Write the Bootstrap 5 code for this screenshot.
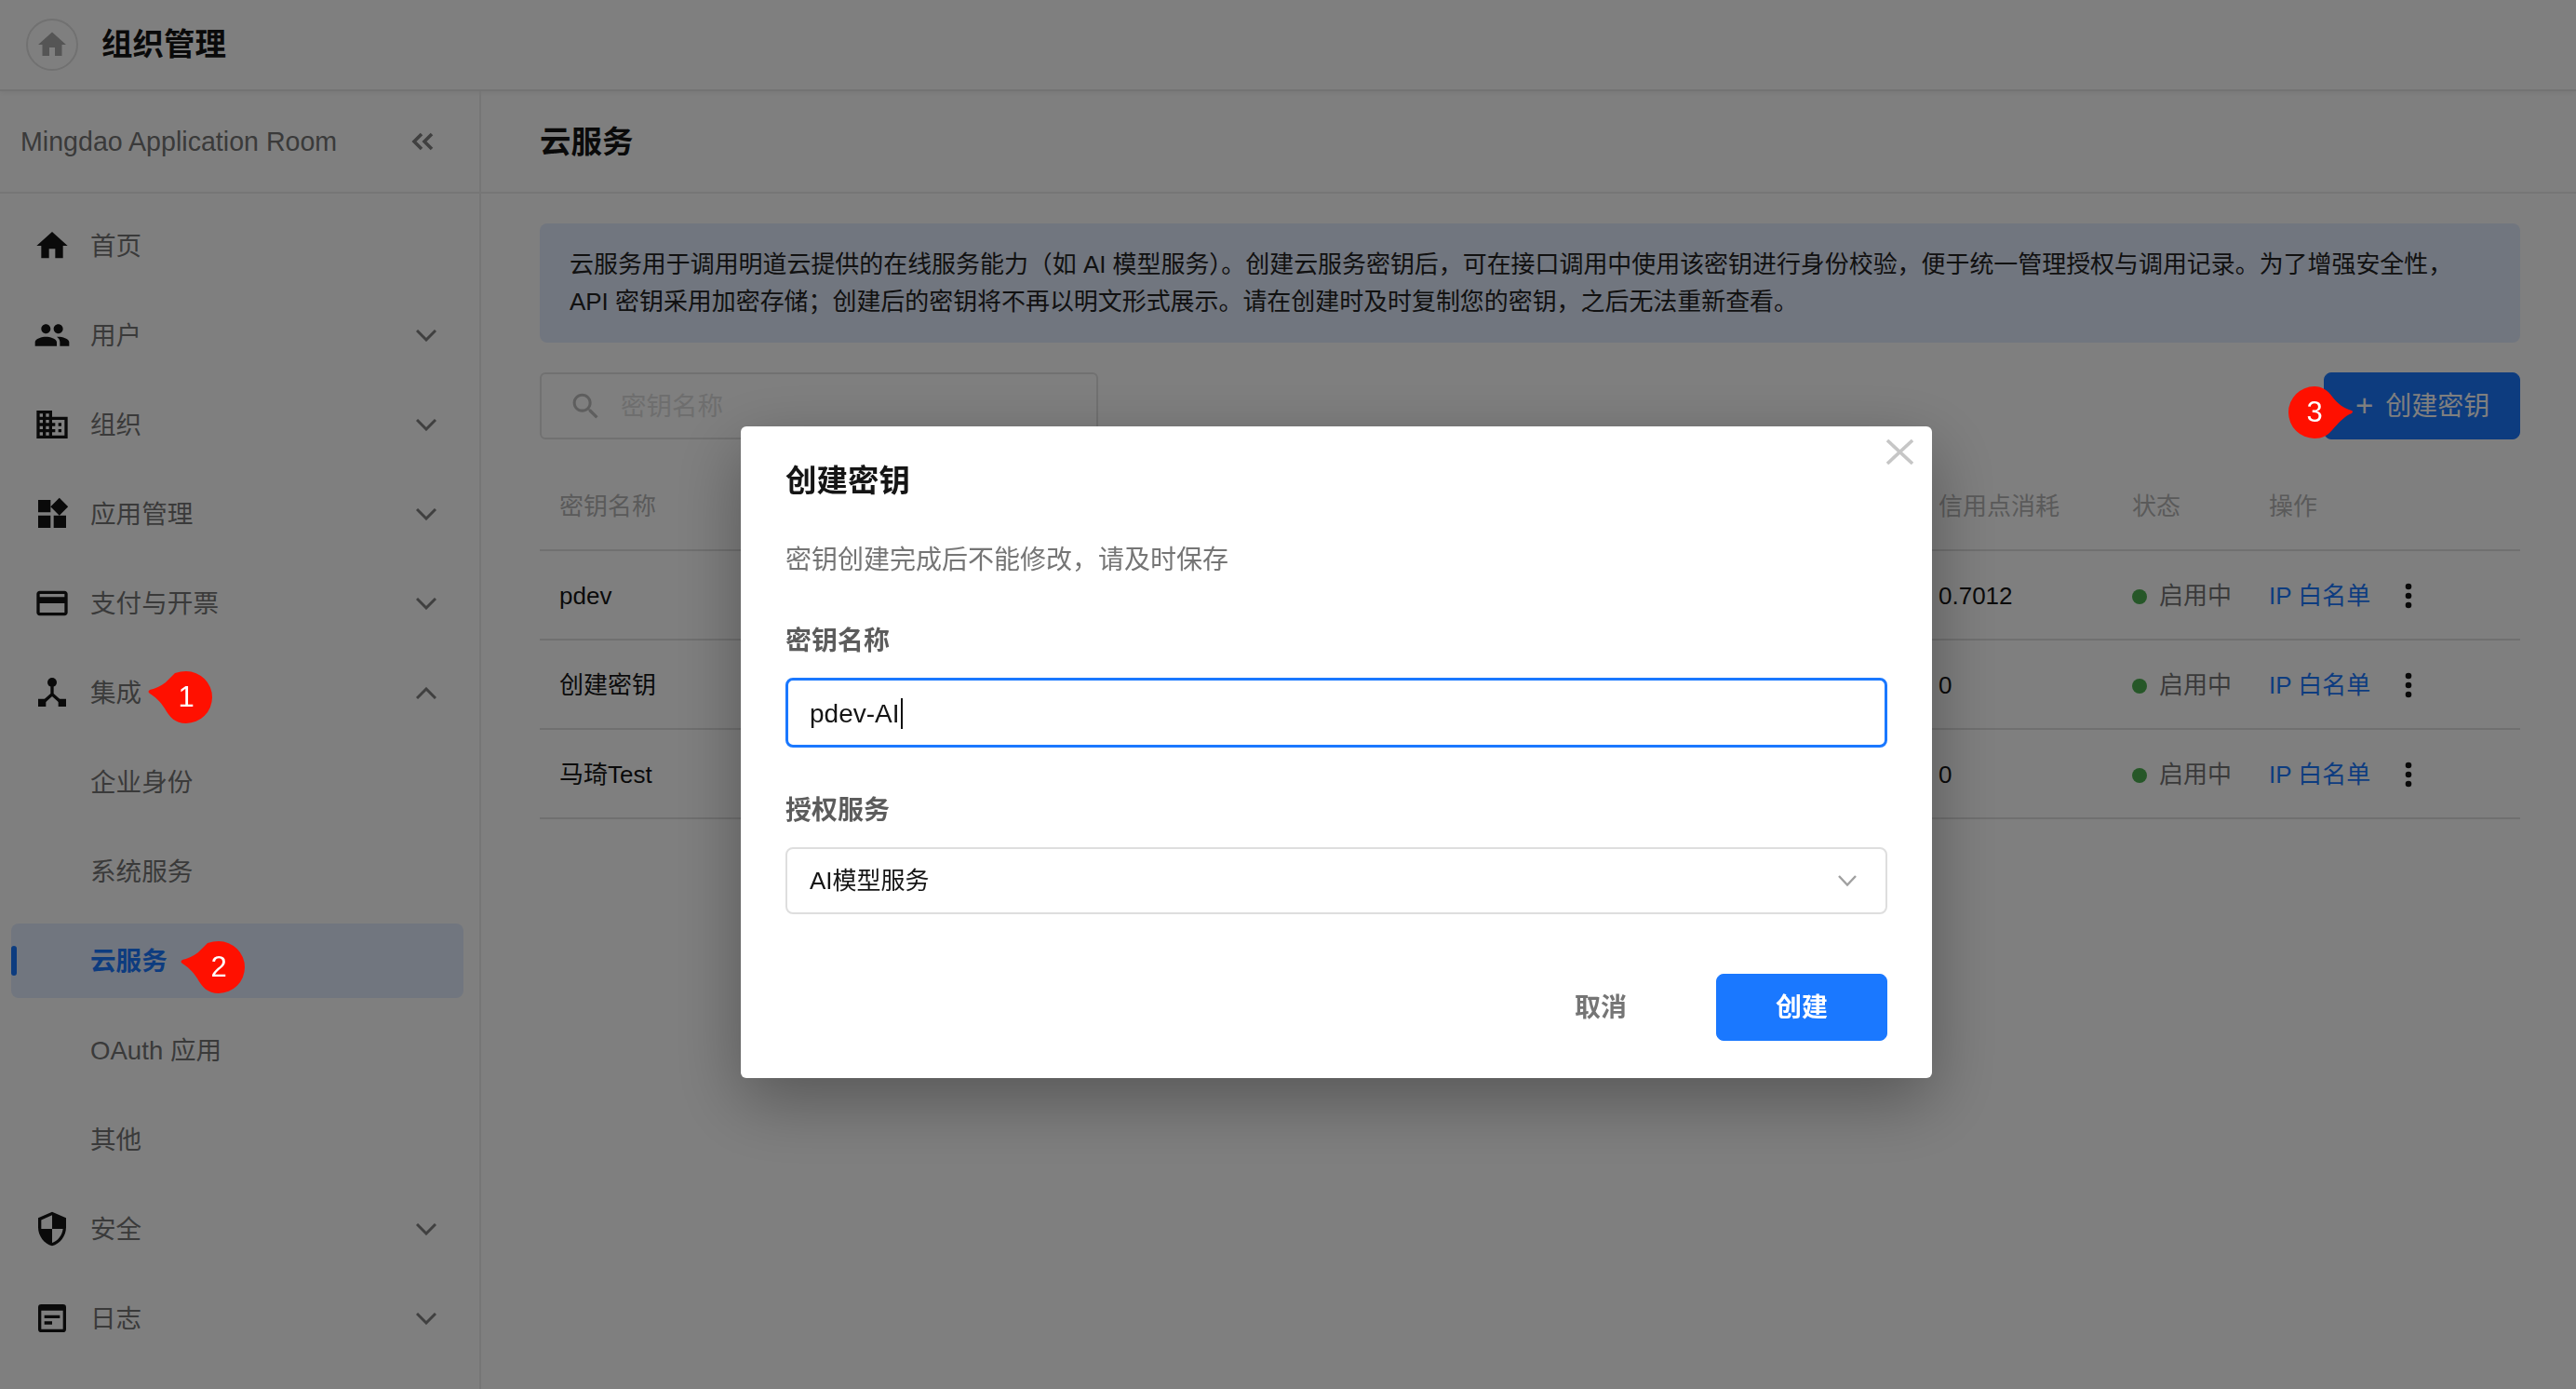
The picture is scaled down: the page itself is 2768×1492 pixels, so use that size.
<!DOCTYPE html>
<html lang="zh-CN">
<head>
  <meta charset="UTF-8" />
  <meta name="viewport" content="width=device-width, initial-scale=1.0"/>
  <title>组织管理 - 云服务</title>
  <link href="https://cdn.jsdelivr.net/npm/bootstrap@5.3.0/dist/css/bootstrap.min.css" rel="stylesheet" />
  <style>
    html, body { height: 100%; overflow: hidden; }
    body {
      font-family: "Liberation Sans", "Noto Sans CJK SC", sans-serif;
      font-size: 28px;
      color: #151515;
      background: #fff;
    }
    .top-bar { height: 98px; padding-left: 28px; border-bottom: 2px solid #e6e6e6; box-shadow: 0 2px 6px rgba(0,0,0,.06); gap: 25px; }
    .home-circle { width: 56px; height: 56px; border: 2px solid #e2e2e2; border-radius: 50%; color: #aaa; }
    .top-title { font-size: 33.5px; font-weight: 700; line-height: 1; }
    .page-body { height: 1394px; }

    .side-panel { width: 517px; flex: none; border-right: 2px solid #ececec; }
    .side-head { height: 110px; padding: 0 49px 0 22px; border-bottom: 2px solid #ececec; color: #757575; font-size: 28.6px; }
    .side-menu { padding: 16px 17px 0 12px; gap: 16px; }
    .menu-row { height: 80px; padding: 0 29px 0 24px; color: #757575; text-decoration: none; border-radius: 8px; gap: 21px; font-size: 27.6px; }
    .menu-row > span { padding-top: 2px; }
    .menu-row > svg:first-child { width: 40px; height: 40px; flex: none; color: #151515; }
    .menu-row .row-arrow { width: 22px; height: 13px; margin-left: auto; color: #808080; }
    .menu-sub { padding-left: 85px; }
    .menu-on { background: #e2ecff; color: #1a78ff; font-weight: 700; }
    .menu-on::before { content: ""; position: absolute; left: 0; top: 24px; width: 6px; height: 32px; border-radius: 3px; background: #1a78ff; }

    .main-panel { padding: 0 60px 0 63px; min-width: 0; }
    .main-wrap { min-width: 0; }
    .main-head { height: 110px; padding: 2px 0 0 63px; border-bottom: 2px solid #ececec; font-size: 33.5px; font-weight: 700; }
    .info-box { height: 128px; padding: 24px 32px; margin-top: 32px; background: #e2ecff; border-radius: 8px; font-size: 25.94px; line-height: 40px; color: #222; white-space: nowrap; }
    .tool-row { margin-top: 32px; height: 72px; }
    .search-box { width: 600px; height: 72px; padding-left: 29px; gap: 19px; border: 2px solid #e2e2e2; border-radius: 6px; color: #bdbdbd; }
    .search-box svg { width: 37px; height: 37px; flex: none; }
    .search-box input { border: 0; padding: 2px 0 0; font-size: 27.5px; background: transparent; box-shadow: none; }
    .search-box input::placeholder { color: #dcdcdc; opacity: 1; }
    .add-btn { width: 211px; height: 72px; padding: 2px 0 0 33px; gap: 13px; font-size: 28px; --bs-btn-bg: #1a78ff; --bs-btn-border-color: #1a78ff; border-radius: 8px; }
    .plus-sign { font-size: 33px; line-height: 1; margin-top: -4px; }

    .key-table { margin: 24px 0 0; border-collapse: separate; border-spacing: 0; table-layout: fixed; width: 2128px; font-size: 26px; }
    .key-table th, .key-table td { height: 96px; padding: 2px 0 0 19px; vertical-align: middle; border-bottom: 2px solid #e0e0e0; background: transparent; white-space: nowrap; }
    .key-table th:first-child, .key-table td:first-child { padding-left: 21px; }
    .key-table th { font-weight: 400; color: #b5b5b5; }
    .key-table td { color: #151515; }
    .col-name { width: 1484px; }
    .col-cost { width: 208px; }
    .col-state { width: 147px; }
    .state-dot { display: inline-block; width: 16px; height: 16px; margin-right: 13px; border-radius: 50%; background: #4caf50; vertical-align: 0; }
    .state-text { color: #757575; }
    .ip-link { color: #1a78ff; text-decoration: none; }
    .more-dots { width: 8px; height: 28px; margin-left: 37px; vertical-align: -5px; color: #151515; }

    .modal-dialog.key-dialog { max-width: none; width: 1280px; margin: 458px 0 0 796px; }
    .key-dialog .modal-content { height: 700px; border: 0; border-radius: 6px; box-shadow: 0 24px 72px rgba(0,0,0,.32); color: #151515; }
    .key-dialog .modal-body { padding: 37px 48px 40px 48px; }
    .dialog-close { position: absolute; top: 14px; right: 20px; width: 29px; height: 27px; padding: 0; border: 0; background: none; color: #c6c6c6; line-height: 0; }
    .dialog-title { margin: 0; font-size: 33.5px; line-height: 44px; font-weight: 700; }
    .dialog-note { margin: 43px 0 0; line-height: 40px; color: #757575; }
    .dialog-label { display: block; margin: 0 0 19px; line-height: 40px; font-weight: 700; color: #5c5c5c; }
    .first-label { margin-top: 47px; }
    .second-label { margin-top: 48px; }
    .key-input { display: flex; align-items: center; height: 75px; padding: 2px 23px 0; border: 3px solid #1a78ff; border-radius: 8px; font-size: 28px; color: #151515; }
    .key-caret { display: inline-block; width: 2px; height: 33px; margin-left: 1px; background: #111; }
    .key-select { height: 72px; padding: 0 24px; border: 2px solid #dedede; border-radius: 8px; font-size: 26px; color: #151515; background-size: 20px 12px; background-position: right 31px center;
      background-image: url("data:image/svg+xml,%3csvg xmlns='http://www.w3.org/2000/svg' viewBox='0 0 20 12'%3e%3cpath fill='none' stroke='%23a0a0a0' stroke-width='2.4' d='M1 1l9 9.500 9-9.500'/%3e%3c/svg%3e"); }
    .dialog-actions { margin-top: 64px; gap: 56px; }
    .cancel-btn { width: 136px; height: 72px; padding: 2px 0 0; font-size: 28px; font-weight: 700; color: #757575; border: 0; }
    .save-btn { width: 184px; height: 72px; padding: 2px 0 0; font-size: 28px; font-weight: 700; --bs-btn-bg: #1a78ff; --bs-btn-border-color: #1a78ff; border-radius: 8px; }

    /* numbered pins sit above the dimmed backdrop */
    .step-pin { position: absolute; width: 70px; height: 56px; z-index: 1060; color: #fff; font-size: 31px; font-weight: 400; }
    .step-pin svg { position: absolute; inset: 0; width: 70px; height: 56px; color: #ff1000; }
    .step-pin span { position: absolute; top: 0; left: 14px; width: 56px; line-height: 56px; text-align: center; }
    .pin-one { left: 146px; top: 17px; }
    .pin-two { left: 181px; top: 19px; }
    .pin-three { left: -39px; top: 14px; }
    .pin-three span { left: 0; }
  </style>
</head>
<body>
  <svg width="0" height="0" class="d-none">
    <symbol id="arrow-down" viewBox="0 0 22 13"><path fill="none" stroke="currentColor" stroke-width="3" d="M1 1l10 10L21 1"/></symbol>
  </svg>

  <header class="top-bar d-flex align-items-center">
    <div class="home-circle d-flex align-items-center justify-content-center">
      <svg width="36" height="36" viewBox="0 0 24 24" fill="currentColor"><path d="M10 20v-6h4v6h5v-8h3L12 3 2 12h3v8z"/></svg>
    </div>
    <div class="top-title">组织管理</div>
  </header>

  <div class="page-body d-flex">
    <aside class="side-panel">
      <div class="side-head d-flex align-items-center justify-content-between">
        <span>Mingdao Application Room</span>
        <svg width="24" height="20" viewBox="0 0 24 20" fill="none" stroke="#808080" stroke-width="3.6"><path d="M11 2L3 10l8 8M22 2l-8 8 8 8"/></svg>
      </div>
      <nav class="side-menu d-flex flex-column">
        <a class="menu-row d-flex align-items-center">
          <svg viewBox="0 0 24 24" fill="currentColor"><path d="M10 20v-6h4v6h5v-8h3L12 3 2 12h3v8z"/></svg>
          <span>首页</span>
        </a>
        <a class="menu-row d-flex align-items-center">
          <svg viewBox="0 0 24 24" fill="currentColor"><path d="M16 11c1.66 0 2.99-1.34 2.99-3S17.66 5 16 5c-1.66 0-3 1.34-3 3s1.34 3 3 3zm-8 0c1.66 0 2.99-1.34 2.99-3S9.66 5 8 5C6.34 5 5 6.34 5 8s1.34 3 3 3zm0 2c-2.33 0-7 1.17-7 3.5V19h14v-2.5c0-2.33-4.67-3.5-7-3.5zm8 0c-.29 0-.62.02-.97.05 1.16.84 1.97 1.97 1.97 3.45V19h6v-2.5c0-2.33-4.67-3.5-7-3.5z"/></svg>
          <span>用户</span>
          <svg class="row-arrow"><use href="#arrow-down"/></svg>
        </a>
        <a class="menu-row d-flex align-items-center">
          <svg viewBox="0 0 24 24" fill="currentColor"><path d="M12 7V3H2v18h20V7H12zM6 19H4v-2h2v2zm0-4H4v-2h2v2zm0-4H4V9h2v2zm0-4H4V5h2v2zm4 12H8v-2h2v2zm0-4H8v-2h2v2zm0-4H8V9h2v2zm0-4H8V5h2v2zm10 12h-8v-2h2v-2h-2v-2h2v-2h-2V9h8v10zm-2-8h-2v2h2v-2zm0 4h-2v2h2v-2z"/></svg>
          <span>组织</span>
          <svg class="row-arrow"><use href="#arrow-down"/></svg>
        </a>
        <a class="menu-row d-flex align-items-center">
          <svg viewBox="0 0 24 24" fill="currentColor"><path d="M13 13v8h8v-8h-8zM3 21h8v-8H3v8zM3 3v8h8V3H3zm13.66-1.31L11 7.34 16.66 13l5.66-5.66-5.66-5.65z"/></svg>
          <span>应用管理</span>
          <svg class="row-arrow"><use href="#arrow-down"/></svg>
        </a>
        <a class="menu-row d-flex align-items-center">
          <svg viewBox="0 0 24 24" fill="currentColor"><path d="M20 4H4c-1.11 0-1.99.89-1.99 2L2 18c0 1.11.89 2 2 2h16c1.11 0 2-.89 2-2V6c0-1.11-.89-2-2-2zm0 14H4v-6h16v6zm0-10H4V6h16v2z"/></svg>
          <span>支付与开票</span>
          <svg class="row-arrow"><use href="#arrow-down"/></svg>
        </a>
        <a class="menu-row d-flex align-items-center position-relative">
          <svg viewBox="0 0 24 24" fill="currentColor"><circle cx="12" cy="5.4" r="3"/><path d="M3 16h5v5H3zM16 16h5v5h-5z"/><path d="M12 8v5l-6 5.5M12 13l6 5.5" fill="none" stroke="currentColor" stroke-width="2"/></svg>
          <span>集成</span>
          <svg class="row-arrow"><use href="#arrow-down" transform="matrix(1 0 0 -1 0 13)"/></svg>
          <div class="step-pin pin-one">
            <svg viewBox="0 0 70 56" fill="currentColor"><path d="M42 0a28 28 0 1 1 0 56C30 56 24 49 19 40 14 32 8 27 3 24Q0 22 3 20 12 18 20 12 26 6 30 2 36 0 42 0z"/></svg>
            <span>1</span>
          </div>
        </a>
        <a class="menu-row menu-sub d-flex align-items-center"><span>企业身份</span></a>
        <a class="menu-row menu-sub d-flex align-items-center"><span>系统服务</span></a>
        <a class="menu-row menu-sub menu-on d-flex align-items-center position-relative">
          <span>云服务</span>
          <div class="step-pin pin-two">
            <svg viewBox="0 0 70 56" fill="currentColor"><path d="M42 0a28 28 0 1 1 0 56C30 56 24 49 19 40 14 32 8 27 3 24Q0 22 3 20 12 18 20 12 26 6 30 2 36 0 42 0z"/></svg>
            <span>2</span>
          </div>
        </a>
        <a class="menu-row menu-sub d-flex align-items-center"><span>OAuth 应用</span></a>
        <a class="menu-row menu-sub d-flex align-items-center"><span>其他</span></a>
        <a class="menu-row d-flex align-items-center">
          <svg viewBox="0 0 24 24" fill="currentColor"><path d="M12 1L3 5v6c0 5.55 3.84 10.74 9 12 5.16-1.26 9-6.45 9-12V5l-9-4zm0 10.99h7c-.53 4.12-3.28 7.79-7 8.94V12H5V6.3l7-3.11v8.8z"/></svg>
          <span>安全</span>
          <svg class="row-arrow"><use href="#arrow-down"/></svg>
        </a>
        <a class="menu-row d-flex align-items-center">
          <svg viewBox="0 0 24 24" fill="currentColor" fill-rule="evenodd"><path d="M5 3h14a2 2 0 0 1 2 2v14a2 2 0 0 1-2 2H5a2 2 0 0 1-2-2V5a2 2 0 0 1 2-2zM5 7v12h14V7zM7 10h10v2H7zM7 14h5v2H7z"/></svg>
          <span>日志</span>
          <svg class="row-arrow"><use href="#arrow-down"/></svg>
        </a>
      </nav>
    </aside>

    <main class="main-wrap flex-grow-1">
      <div class="main-head d-flex align-items-center">云服务</div>
      <div class="main-panel">
        <div class="info-box">云服务用于调用明道云提供的在线服务能力（如 AI 模型服务）。创建云服务密钥后，可在接口调用中使用该密钥进行身份校验，便于统一管理授权与调用记录。为了增强安全性，<br>API 密钥采用加密存储；创建后的密钥将不再以明文形式展示。请在创建时及时复制您的密钥，之后无法重新查看。</div>
        <div class="tool-row d-flex justify-content-between">
          <div class="search-box d-flex align-items-center">
            <svg viewBox="0 0 24 24" fill="currentColor"><path d="M15.5 14h-.79l-.28-.27C15.41 12.59 16 11.11 16 9.5 16 5.91 13.09 3 9.5 3S3 5.91 3 9.5 5.91 16 9.5 16c1.61 0 3.09-.59 4.23-1.57l.27.28v.79l5 4.99L20.49 19l-4.99-5zm-6 0C7.01 14 5 11.99 5 9.5S7.01 5 9.5 5 14 7.01 14 9.5 11.99 14 9.5 14z"/></svg>
            <input type="text" class="form-control" placeholder="密钥名称" />
          </div>
          <button class="btn btn-primary add-btn d-flex align-items-center position-relative">
            <span class="plus-sign">+</span><span>创建密钥</span>
            <div class="step-pin pin-three">
              <svg viewBox="0 0 70 56" fill="currentColor"><path d="M28 0C36 0 42 4 47 11 52 18 60 24 68 26Q70 27 68 29C60 32 53 40 47 47 42 53 36 56 28 56A28 28 0 1 1 28 0z"/></svg>
              <span>3</span>
            </div>
          </button>
        </div>
        <table class="table key-table">
          <colgroup><col class="col-name"><col class="col-cost"><col class="col-state"><col></colgroup>
          <thead>
            <tr><th>密钥名称</th><th>信用点消耗</th><th>状态</th><th>操作</th></tr>
          </thead>
          <tbody>
            <tr>
              <td>pdev</td><td>0.7012</td>
              <td><i class="state-dot"></i><span class="state-text">启用中</span></td>
              <td><a class="ip-link">IP 白名单</a><svg class="more-dots" viewBox="0 0 8 28" fill="currentColor"><circle cx="4" cy="4" r="3.3"/><circle cx="4" cy="14" r="3.3"/><circle cx="4" cy="24" r="3.3"/></svg></td>
            </tr>
            <tr>
              <td>创建密钥</td><td>0</td>
              <td><i class="state-dot"></i><span class="state-text">启用中</span></td>
              <td><a class="ip-link">IP 白名单</a><svg class="more-dots" viewBox="0 0 8 28" fill="currentColor"><circle cx="4" cy="4" r="3.3"/><circle cx="4" cy="14" r="3.3"/><circle cx="4" cy="24" r="3.3"/></svg></td>
            </tr>
            <tr>
              <td>马琦Test</td><td>0</td>
              <td><i class="state-dot"></i><span class="state-text">启用中</span></td>
              <td><a class="ip-link">IP 白名单</a><svg class="more-dots" viewBox="0 0 8 28" fill="currentColor"><circle cx="4" cy="4" r="3.3"/><circle cx="4" cy="14" r="3.3"/><circle cx="4" cy="24" r="3.3"/></svg></td>
            </tr>
          </tbody>
        </table>
      </div>
    </main>
  </div>

  <!-- Create key dialog -->
  <div class="modal-backdrop show"></div>
  <div class="modal d-block" tabindex="-1">
    <div class="modal-dialog key-dialog">
      <div class="modal-content">
        <button class="dialog-close" aria-label="关闭">
          <svg width="29" height="27" viewBox="0 0 29 27" fill="none" stroke="currentColor" stroke-width="3.6"><path d="M1 1l27 25M28 1L1 26"/></svg>
        </button>
        <div class="modal-body">
          <h5 class="dialog-title">创建密钥</h5>
          <p class="dialog-note">密钥创建完成后不能修改，请及时保存</p>
          <label class="dialog-label first-label">密钥名称</label>
          <div class="form-control key-input">pdev-AI<span class="key-caret"></span></div>
          <label class="dialog-label second-label">授权服务</label>
          <select class="form-select key-select">
            <option>AI模型服务</option>
          </select>
          <div class="dialog-actions d-flex justify-content-end">
            <button class="btn cancel-btn">取消</button>
            <button class="btn btn-primary save-btn">创建</button>
          </div>
        </div>
      </div>
    </div>
  </div>

  <script src="https://cdn.jsdelivr.net/npm/bootstrap@5.3.0/dist/js/bootstrap.bundle.min.js"></script>
</body>
</html>
